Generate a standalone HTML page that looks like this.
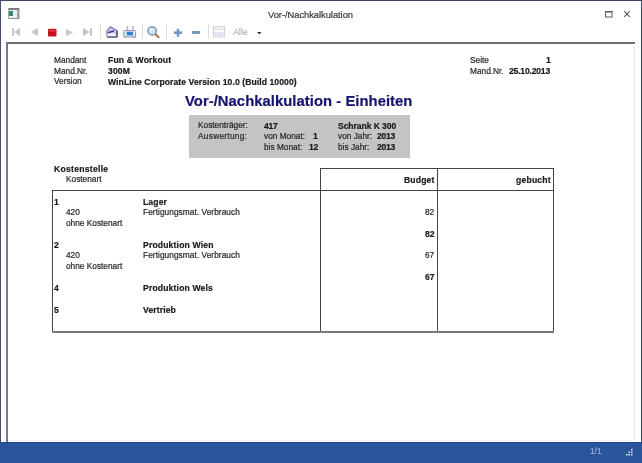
<!DOCTYPE html>
<html><head><meta charset="utf-8"><style>
html,body{margin:0;padding:0;}
body{width:642px;height:463px;position:relative;overflow:hidden;background:#fff;font-family:"Liberation Sans", sans-serif;}
.t{position:absolute;white-space:pre;will-change:transform;-webkit-text-stroke:0.2px currentColor;}
.r{position:absolute;}
</style></head><body>
<div class="r" style="left:0px;top:0px;width:642px;height:1px;background:#3a4766;"></div><div class="r" style="left:0px;top:0px;width:1px;height:442px;background:#454e6a;"></div><div class="r" style="left:641px;top:0px;width:1px;height:442px;background:#3a4f70;"></div><div class="r" style="left:6px;top:42px;width:629px;height:2px;background:#707070;"></div><div class="r" style="left:6px;top:42px;width:2px;height:400px;background:#7a7a7a;"></div><div class="r" style="left:634px;top:46px;width:1px;height:395px;background:#e6e6e6;"></div><div class="r" style="left:8px;top:440px;width:627px;height:1px;background:#f4f4f4;"></div><div class="r" style="left:0px;top:442px;width:642px;height:21px;background:#2b559a;"></div><div class="r" style="left:0px;top:442px;width:642px;height:1px;background:#21488b;"></div><div class="r" style="left:189px;top:115px;width:221px;height:43px;background:#c4c4c4;"></div><div class="r" style="left:320px;top:168px;width:234px;height:1px;background:#444444;"></div><div class="r" style="left:52px;top:190px;width:502px;height:1px;background:#444444;"></div><div class="r" style="left:52px;top:190px;width:1px;height:142px;background:#444444;"></div><div class="r" style="left:320px;top:168px;width:1px;height:164px;background:#444444;"></div><div class="r" style="left:437px;top:168px;width:1px;height:164px;background:#444444;"></div><div class="r" style="left:553px;top:168px;width:1px;height:164px;background:#444444;"></div><div class="r" style="left:52px;top:331px;width:502px;height:2px;background:#7a7a7a;"></div>

<svg class="r" style="left:0;top:0" width="642" height="42" viewBox="0 0 642 42">
  <!-- app icon -->
  <rect x="8" y="8" width="12" height="11" fill="#e2f4f4"/>
  <rect x="8" y="8" width="12" height="2" fill="#7e7880"/>
  <rect x="8" y="18" width="12" height="1" fill="#8a8a8a"/>
  <rect x="8" y="8" width="1" height="11" fill="#a8a8a8"/>
  <rect x="17" y="10" width="2" height="8" fill="#a0a0a0"/>
  <rect x="19" y="8" width="1" height="11" fill="#c8c8c8"/>
  <rect x="9" y="11" width="4" height="5" fill="#3a857c"/>
  <!-- maximize -->
  <rect x="605.5" y="11.5" width="6.5" height="5.5" fill="none" stroke="#5a5a5a" stroke-width="1"/>
  <rect x="605" y="11" width="7.5" height="1.5" fill="#5a5a5a"/>
  <!-- close -->
  <path d="M624.2 11.2 L629.8 16.8 M629.8 11.2 L624.2 16.8" stroke="#505050" stroke-width="1.05"/>
  <!-- first -->
  <rect x="12" y="28" width="2" height="8" fill="#c6c6c6"/>
  <path d="M20 28 L20 36 L14 32 Z" fill="#c6c6c6"/>
  <!-- prev -->
  <path d="M38 28 L38 36 L31 32 Z" fill="#c6c6c6"/>
  <!-- stop -->
  <rect x="48" y="28.8" width="8.5" height="7.6" rx="1" fill="#c4121c"/>
  <rect x="49" y="29.8" width="6.5" height="1.8" fill="#de3a42"/>
  <!-- next -->
  <path d="M66 29 L66 36 L73 32.5 Z" fill="#c6c6c6"/>
  <!-- last -->
  <path d="M83 28 L83 36 L90 32 Z" fill="#c6c6c6"/>
  <rect x="90" y="28" width="2" height="8" fill="#c6c6c6"/>
  <!-- separators -->
  <rect x="100" y="24" width="1" height="15" fill="#dcdcdc"/>
  <rect x="142" y="24" width="1" height="15" fill="#dcdcdc"/>
  <rect x="166" y="24" width="1" height="15" fill="#dcdcdc"/>
  <rect x="208" y="24" width="1" height="15" fill="#dcdcdc"/>
  <!-- mail -->
  <path d="M106.8 31.4 L110.2 26.6 L116.8 30.4 L117 36.9 L107.2 37 Z" fill="#cdc6f2" stroke="#5a5890" stroke-width="1"/>
  <path d="M107.4 33.9 L112 32.8 L116.3 34.4 L116.4 36.4 L107.6 36.4 Z" fill="#f2f1fd"/>
  <path d="M108.2 32.7 L113.9 30.9" stroke="#4a3e98" stroke-width="1.7" fill="none"/>
  <path d="M117 30.6 L117 37 L107.4 37" stroke="#3c3a66" stroke-width="1.1" fill="none"/>
  <!-- printer -->
  <rect x="127.5" y="26" width="5.5" height="4.5" fill="#f6f6f6"/>
  <rect x="126.8" y="26" width="1" height="4.5" fill="#a0a0a0"/>
  <rect x="132.6" y="26" width="1" height="4.5" fill="#a0a0a0"/>
  <rect x="123.8" y="30.5" width="11.8" height="6.5" rx="1" fill="#e0ecf6" stroke="#8c949c" stroke-width="1"/>
  <rect x="126.8" y="31.8" width="6.2" height="3.6" fill="#2f7fd0"/>
  <rect x="124" y="36.5" width="2" height="1.2" fill="#8c949c"/>
  <rect x="133.5" y="36.5" width="2" height="1.2" fill="#8c949c"/>
  <!-- magnifier -->
  <path d="M155.6 34.4 L158.6 37.2" stroke="#b07a50" stroke-width="2.2" stroke-linecap="round"/>
  <circle cx="152.1" cy="30.9" r="4.2" fill="#c6e2f8" stroke="#607688" stroke-width="1.1"/>
  <circle cx="151.4" cy="30" r="1.6" fill="#e4f2fc"/>
  <!-- plus -->
  <rect x="176.7" y="28.8" width="2.6" height="7.8" fill="#7095c0"/>
  <rect x="174" y="31.4" width="8" height="2.6" fill="#7095c0"/>
  <!-- minus -->
  <rect x="192" y="31" width="8" height="3" fill="#7a96b8"/>
  <!-- page icon -->
  <rect x="213.5" y="26.5" width="11" height="10.5" fill="#f8f8fb" stroke="#d2d2d2" stroke-width="1"/>
  <rect x="214" y="28.5" width="10" height="1" fill="#d6d6d6"/>
  <rect x="214.5" y="32" width="9" height="4" fill="#e4e2f4"/>
  <!-- dropdown arrow -->
  <path d="M257 32 L261.5 32 L259.25 34.5 Z" fill="#333"/>
</svg>

<div class="t" style="left:268px;top:8.7px;font-size:9.4px;line-height:12px;color:#3a3a3a;letter-spacing:-0.05px">Vor-/Nachkalkulation</div>
<div class="t" style="left:233.3px;top:27.0px;font-size:8.8px;line-height:11px;color:#b4b4b4">Alle</div>
<div class="t" style="left:54px;top:55.74px;font-size:8.3px;line-height:9.96px;font-weight:normal;color:#262626;letter-spacing:0.0px">Mandant</div>
<div class="t" style="left:108px;top:55.46px;font-size:8.6px;line-height:10.32px;font-weight:bold;color:#1a1a1a;letter-spacing:0.14px">Fun &amp; Workout</div>
<div class="t" style="left:54px;top:66.54px;font-size:8.3px;line-height:9.96px;font-weight:normal;color:#262626;letter-spacing:0.0px">Mand.Nr.</div>
<div class="t" style="left:108px;top:66.26px;font-size:8.6px;line-height:10.32px;font-weight:bold;color:#1a1a1a;letter-spacing:0.15px">300M</div>
<div class="t" style="left:54px;top:77.14px;font-size:8.3px;line-height:9.96px;font-weight:normal;color:#262626;letter-spacing:0.0px">Version</div>
<div class="t" style="left:108px;top:76.86px;font-size:8.6px;line-height:10.32px;font-weight:bold;color:#1a1a1a;letter-spacing:0.08px">WinLine Corporate Version 10.0 (Build 10000)</div>
<div class="t" style="left:470px;top:55.94px;font-size:8.3px;line-height:9.96px;font-weight:normal;color:#262626;letter-spacing:0.0px">Seite</div>
<div class="t" style="right:91.70px;top:54.86px;font-size:8.6px;line-height:10.32px;font-weight:bold;color:#1a1a1a;letter-spacing:0.0px">1</div>
<div class="t" style="left:470px;top:66.54px;font-size:8.3px;line-height:9.96px;font-weight:normal;color:#262626;letter-spacing:0.0px">Mand.Nr.</div>
<div class="t" style="right:91.70px;top:66.26px;font-size:8.6px;line-height:10.32px;font-weight:bold;color:#1a1a1a;letter-spacing:-0.2px">25.10.2013</div>
<div class="t" style="left:184.5px;top:92.79px;font-size:14.8px;line-height:17.76px;font-weight:bold;color:#14146e;letter-spacing:0.05px">Vor-/Nachkalkulation - Einheiten</div>
<div class="t" style="left:197.5px;top:120.94px;font-size:8.3px;line-height:9.96px;font-weight:normal;color:#262626;letter-spacing:0.0px">Kostenträger:</div>
<div class="t" style="left:263.5px;top:120.66px;font-size:8.6px;line-height:10.32px;font-weight:bold;color:#1a1a1a;letter-spacing:-0.3px">417</div>
<div class="t" style="left:338px;top:120.66px;font-size:8.6px;line-height:10.32px;font-weight:bold;color:#1a1a1a;letter-spacing:-0.08px">Schrank K 300</div>
<div class="t" style="left:197.5px;top:131.74px;font-size:8.3px;line-height:9.96px;font-weight:normal;color:#262626;letter-spacing:0.28px">Auswertung:</div>
<div class="t" style="left:263.5px;top:131.74px;font-size:8.3px;line-height:9.96px;font-weight:normal;color:#262626;letter-spacing:0.0px">von Monat:</div>
<div class="t" style="right:324.50px;top:131.46px;font-size:8.6px;line-height:10.32px;font-weight:bold;color:#1a1a1a;letter-spacing:0.0px">1</div>
<div class="t" style="left:338px;top:131.74px;font-size:8.3px;line-height:9.96px;font-weight:normal;color:#262626;letter-spacing:0.0px">von Jahr:</div>
<div class="t" style="right:246.75px;top:131.46px;font-size:8.6px;line-height:10.32px;font-weight:bold;color:#1a1a1a;letter-spacing:-0.25px">2013</div>
<div class="t" style="left:263.5px;top:142.54px;font-size:8.3px;line-height:9.96px;font-weight:normal;color:#262626;letter-spacing:0.0px">bis Monat:</div>
<div class="t" style="right:324.00px;top:142.26px;font-size:8.6px;line-height:10.32px;font-weight:bold;color:#1a1a1a;letter-spacing:-0.2px">12</div>
<div class="t" style="left:338px;top:142.54px;font-size:8.3px;line-height:9.96px;font-weight:normal;color:#262626;letter-spacing:0.0px">bis Jahr:</div>
<div class="t" style="right:246.75px;top:142.26px;font-size:8.6px;line-height:10.32px;font-weight:bold;color:#1a1a1a;letter-spacing:-0.25px">2013</div>
<div class="t" style="left:54px;top:164.06px;font-size:8.6px;line-height:10.32px;font-weight:bold;color:#1a1a1a;letter-spacing:0.27px">Kostenstelle</div>
<div class="t" style="left:66px;top:175.34px;font-size:8.3px;line-height:9.96px;font-weight:normal;color:#262626;letter-spacing:0.0px">Kostenart</div>
<div class="t" style="right:207.85px;top:175.46px;font-size:8.6px;line-height:10.32px;font-weight:bold;color:#1a1a1a;letter-spacing:0.15px">Budget</div>
<div class="t" style="right:90.80px;top:175.46px;font-size:8.6px;line-height:10.32px;font-weight:bold;color:#1a1a1a;letter-spacing:0.2px">gebucht</div>
<div class="t" style="left:54px;top:196.66px;font-size:8.6px;line-height:10.32px;font-weight:bold;color:#1a1a1a;letter-spacing:0.0px">1</div>
<div class="t" style="left:143.4px;top:196.66px;font-size:8.6px;line-height:10.32px;font-weight:bold;color:#1a1a1a;letter-spacing:0.12px">Lager</div>
<div class="t" style="left:66px;top:207.94px;font-size:8.3px;line-height:9.96px;font-weight:normal;color:#262626;letter-spacing:0.0px">420</div>
<div class="t" style="left:143.4px;top:207.74px;font-size:8.3px;line-height:9.96px;font-weight:normal;color:#262626;letter-spacing:0.06px">Fertigungsmat. Verbrauch</div>
<div class="t" style="right:207.70px;top:208.14px;font-size:8.3px;line-height:9.96px;font-weight:normal;color:#262626;letter-spacing:0.0px">82</div>
<div class="t" style="left:66px;top:218.74px;font-size:8.3px;line-height:9.96px;font-weight:normal;color:#262626;letter-spacing:0.0px">ohne Kostenart</div>
<div class="t" style="right:207.70px;top:229.16px;font-size:8.6px;line-height:10.32px;font-weight:bold;color:#1a1a1a;letter-spacing:0.0px">82</div>
<div class="t" style="left:54px;top:239.66px;font-size:8.6px;line-height:10.32px;font-weight:bold;color:#1a1a1a;letter-spacing:0.0px">2</div>
<div class="t" style="left:143.4px;top:239.66px;font-size:8.6px;line-height:10.32px;font-weight:bold;color:#1a1a1a;letter-spacing:0.16px">Produktion Wien</div>
<div class="t" style="left:66px;top:250.94px;font-size:8.3px;line-height:9.96px;font-weight:normal;color:#262626;letter-spacing:0.0px">420</div>
<div class="t" style="left:143.4px;top:250.74px;font-size:8.3px;line-height:9.96px;font-weight:normal;color:#262626;letter-spacing:0.06px">Fertigungsmat. Verbrauch</div>
<div class="t" style="right:207.70px;top:251.34px;font-size:8.3px;line-height:9.96px;font-weight:normal;color:#262626;letter-spacing:0.0px">67</div>
<div class="t" style="left:66px;top:261.64px;font-size:8.3px;line-height:9.96px;font-weight:normal;color:#262626;letter-spacing:0.0px">ohne Kostenart</div>
<div class="t" style="right:207.70px;top:272.46px;font-size:8.6px;line-height:10.32px;font-weight:bold;color:#1a1a1a;letter-spacing:0.0px">67</div>
<div class="t" style="left:54px;top:283.46px;font-size:8.6px;line-height:10.32px;font-weight:bold;color:#1a1a1a;letter-spacing:0.0px">4</div>
<div class="t" style="left:143.4px;top:283.46px;font-size:8.6px;line-height:10.32px;font-weight:bold;color:#1a1a1a;letter-spacing:0.16px">Produktion Wels</div>
<div class="t" style="left:54px;top:305.06px;font-size:8.6px;line-height:10.32px;font-weight:bold;color:#1a1a1a;letter-spacing:0.0px">5</div>
<div class="t" style="left:143.4px;top:305.06px;font-size:8.6px;line-height:10.32px;font-weight:bold;color:#1a1a1a;letter-spacing:0.12px">Vertrieb</div>

<div class="t" style="left:589.5px;top:445.5px;font-size:8.3px;line-height:10px;color:#9cb2d6">1/1</div>
<svg class="r" style="left:619px;top:442px" width="21" height="21" viewBox="0 0 21 21">
  <rect x="12" y="7" width="1.5" height="1.5" fill="#dfe8f6"/>
  <rect x="9.5" y="9.5" width="1.5" height="1.5" fill="#dfe8f6"/>
  <rect x="12" y="9.5" width="1.5" height="1.5" fill="#dfe8f6"/>
  <rect x="7" y="12" width="1.5" height="1.5" fill="#dfe8f6"/>
  <rect x="9.5" y="12" width="1.5" height="1.5" fill="#dfe8f6"/>
  <rect x="12" y="12" width="1.5" height="1.5" fill="#dfe8f6"/>
</svg>

</body></html>
